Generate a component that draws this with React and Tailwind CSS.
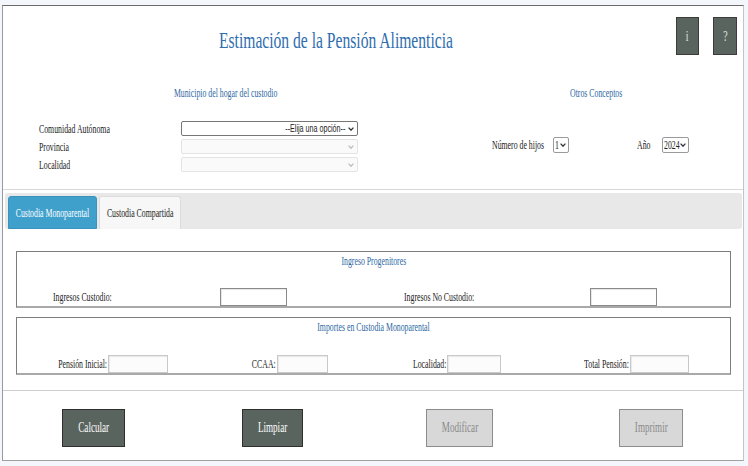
import React from "react";

function N({ children, o = "l", className = "" }) {
  const origin = o === "c" ? "origin-center" : o === "r" ? "origin-right" : "origin-left";
  return (
    <span className={"inline-block shrink-0 whitespace-nowrap scale-x-[0.65] " + origin + " " + className}>
      {children}
    </span>
  );
}

function Chev({ color = "#333" }) {
  return (
    <svg width="6" height="4" viewBox="0 0 6 4" className="shrink-0">
      <path d="M0.6 0.6 L3 3.2 L5.4 0.6" stroke={color} strokeWidth="1.3" fill="none" />
    </svg>
  );
}

function Select({ text, disabled }) {
  return (
    <div
      className={
        disabled
          ? "w-[177px] h-[15px] border border-[#e4e4e4] bg-[#fafafa] rounded-[2px] flex items-center justify-end pr-[3px]"
          : "w-[177px] h-[15px] border border-[#767676] bg-white rounded-[2px] flex items-center justify-end pr-[3px] gap-[3px]"
      }
    >
      {text && (
        <N o="r" className="font-[family-name:'Liberation_Sans',sans-serif] text-[11px] leading-[13px] text-[#222]">
          {text}
        </N>
      )}
      <Chev color={disabled ? "#bdbdbd" : "#333"} />
    </div>
  );
}

function SmallSelect({ text, w }) {
  return (
    <div className={"h-[16px] border border-[#9a9a9a] rounded-[2px] flex items-center pl-[1px] pr-[2px] bg-white " + w}>
      <div className="flex-1 min-w-0 flex">
        <N className="text-[12px] leading-[14px]">{text}</N>
      </div>
      <Chev />
    </div>
  );
}

function DarkBtn({ label, w }) {
  return (
    <button className={"h-[38px] bg-[#59645f] border border-[#2f2f2f] text-white text-[14px] leading-[16px] " + w}>
      <N o="c">{label}</N>
    </button>
  );
}

function GreyBtn({ label, w }) {
  return (
    <button className={"h-[38px] bg-[#d8d8d8] border border-[#8c8c8c] text-[#8a8a8a] text-[14px] leading-[16px] " + w}>
      <N o="c">{label}</N>
    </button>
  );
}

function Out({ label, lw, iw }) {
  return (
    <>
      <div className={"flex justify-end pr-[1px] " + lw}>
        <N o="r">{label}</N>
      </div>
      <div className={"h-[18px] border border-[#c9c9c9] bg-[#fcfcfc] shadow-[inset_1px_1px_1px_rgba(0,0,0,0.08)] " + iw} />
    </>
  );
}

export default function App() {
  return (
    <div className="w-[748px] h-[466px] bg-[#f3f6fa] pt-[5px] font-[family-name:'Liberation_Serif',serif] text-[#222] overflow-hidden">
      <div className="ml-[2px] w-[742px] h-[456px] bg-white border-t border-t-[#6b6b6b] border-l border-l-[#9a9a9a] border-r border-r-[#c4c4c4] border-b border-b-[#a0a0a0] flex flex-col">
        {/* Header */}
        <div className="flex h-[64px] shrink-0">
          <div className="flex-1 flex justify-center pt-[20px]">
            <N o="c" className="text-[24px] leading-[28px] text-[#2f6eb0]">
              Estimación de la Pensión Alimenticia
            </N>
          </div>
          <div className="flex gap-[14px] pt-[11px] pl-[7px] pr-[6px]">
            <button className="w-[23px] h-[38px] bg-[#59645f] border border-[#3b3b3b] text-[#e4e4e4] text-[15px] leading-[16px]">
              <N o="c">i</N>
            </button>
            <button className="w-[24px] h-[38px] bg-[#59645f] border border-[#3b3b3b] text-[#e4e4e4] text-[15px] leading-[16px]">
              <N o="c">?</N>
            </button>
          </div>
        </div>

        {/* Two columns */}
        <div className="flex h-[120px] shrink-0 border-b border-[#d8d8d8]">
          <div className="w-[446px] flex flex-col pt-[16px]">
            <div className="flex justify-center h-[14px] text-[12px] leading-[14px] text-[#2e68a3]">
              <N o="c">Municipio del hogar del custodio</N>
            </div>
            <div className="mt-[21px] flex flex-col gap-[3px] pl-[36px] text-[12px] leading-[14px]">
              <div className="flex items-center h-[15px]">
                <div className="w-[142px]"><N>Comunidad Autónoma</N></div>
                <Select text="--Elija una opción--" />
              </div>
              <div className="flex items-center h-[15px]">
                <div className="w-[142px]"><N>Provincia</N></div>
                <Select disabled />
              </div>
              <div className="flex items-center h-[15px]">
                <div className="w-[142px]"><N>Localidad</N></div>
                <Select disabled />
              </div>
            </div>
          </div>
          <div className="flex-1 flex flex-col pt-[16px]">
            <div className="flex justify-center h-[14px] text-[12px] leading-[14px] text-[#2e68a3]">
              <N o="c">Otros Conceptos</N>
            </div>
            <div className="mt-[37px] h-[16px] flex items-center pl-[43px] text-[12px] leading-[14px]">
              <div className="w-[61px]"><N>Número de hijos</N></div>
              <SmallSelect text="1" w="w-[16px]" />
              <div className="w-[68px]" />
              <div className="w-[25px]"><N>Año</N></div>
              <SmallSelect text="2024" w="w-[27px]" />
            </div>
          </div>
        </div>

        {/* Tabs panel */}
        <div className="flex flex-col shrink-0 border-b border-[#cfcfcf] pb-[15px]">
          <div className="pt-[3px] pl-[2px] pr-[1px]">
            <div className="h-[36px] bg-[#e8e8e8] rounded-[3px] flex items-end pl-[3px] gap-[2px] text-[12px] leading-[14px]">
              <div className="w-[89px] h-[33px] bg-[#40a0cc] border border-[#3a93bd] rounded-t-[3px] text-white flex items-center justify-center">
                <N o="c">Custodia Monoparental</N>
              </div>
              <div className="w-[82px] h-[33px] bg-[#f7f7f7] border border-b-0 border-[#dcdcdc] rounded-t-[3px] flex items-center justify-center">
                <N o="c">Custodia Compartida</N>
              </div>
            </div>
          </div>

          {/* Fieldset 1 */}
          <div className="mt-[22px] ml-[13px] mr-[12px] border-t border-l border-r border-[#7d7d7d] border-b-2 border-b-[#a9a9a9] pt-[2px] text-[12px] leading-[14px]">
            <div className="flex justify-center h-[14px] text-[#2e68a3]">
              <N o="c">Ingreso Progenitores</N>
            </div>
            <div className="mt-[20px] flex items-center h-[18px] pl-[36px]">
              <div className="w-[167px]"><N>Ingresos Custodio:</N></div>
              <div className="w-[67px] h-[18px] border border-[#8a8a8a] bg-white shadow-[inset_1px_1px_1px_rgba(0,0,0,0.1)]" />
              <div className="ml-[117px] w-[186px]"><N>Ingresos No Custodio:</N></div>
              <div className="w-[67px] h-[18px] border border-[#8a8a8a] bg-white shadow-[inset_1px_1px_1px_rgba(0,0,0,0.1)]" />
            </div>
          </div>

          {/* Fieldset 2 */}
          <div className="mt-[9px] ml-[13px] mr-[12px] border-t border-l border-r border-[#7d7d7d] border-b-2 border-b-[#a9a9a9] pt-[2px] text-[12px] leading-[14px]">
            <div className="flex justify-center h-[14px] text-[#2e68a3]">
              <N o="c">Importes en Custodia Monoparental</N>
            </div>
            <div className="mt-[21px] flex items-center h-[18px]">
              <Out label="Pensión Inicial:" lw="w-[91px]" iw="w-[60px]" />
              <Out label="CCAA:" lw="w-[109px]" iw="w-[51px]" />
              <Out label="Localidad:" lw="w-[119px]" iw="w-[54px]" />
              <Out label="Total Pensión:" lw="w-[129px]" iw="w-[59px]" />
            </div>
          </div>
        </div>

        {/* Buttons */}
        <div className="flex pt-[18px]">
          <div className="ml-[59px]"><DarkBtn label="Calcular" w="w-[63px]" /></div>
          <div className="ml-[117px]"><DarkBtn label="Limpiar" w="w-[61px]" /></div>
          <div className="ml-[123px]"><GreyBtn label="Modificar" w="w-[67px]" /></div>
          <div className="ml-[126px]"><GreyBtn label="Imprimir" w="w-[64px]" /></div>
        </div>
      </div>
    </div>
  );
}
